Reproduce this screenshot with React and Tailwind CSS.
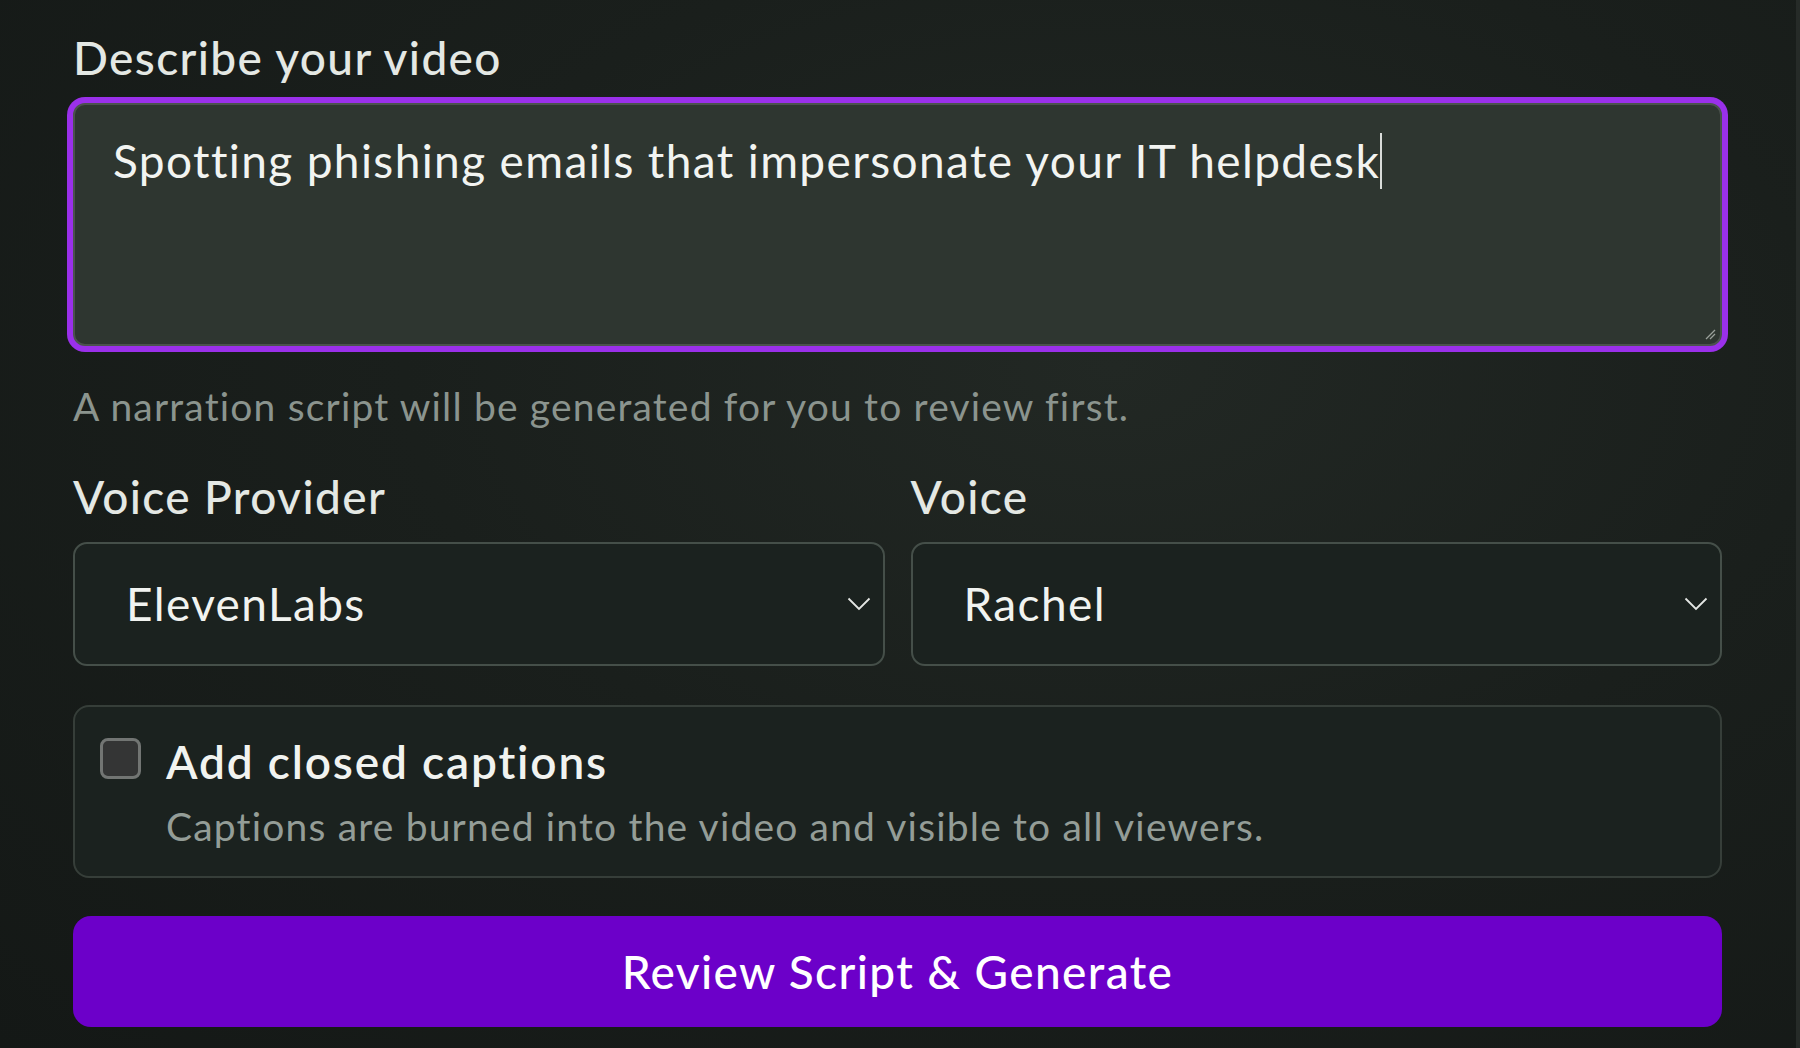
import React from 'react';

function Chevron() {
  return (
    <svg width="24" height="14" viewBox="0 0 24 14" fill="none" className="shrink-0">
      <polyline points="1.5,1.5 12,12 22.5,1.5" stroke="#e4e7e4" strokeWidth="1.8" />
    </svg>
  );
}

function Select({ value }) {
  return (
    <div className="h-[124px] flex items-center justify-between rounded-[14px] border-2 border-[#454f49] bg-[#1b221f] pl-[51px] pr-[12px]">
      <span className="text-[46px] leading-[56px] tracking-[0.03em] text-[#f1f3f0]">{value}</span>
      <Chevron />
    </div>
  );
}

export default function App() {
  return (
    <div className="w-[1800px] h-[1048px] overflow-hidden border-r-[4px] border-[#262b28] bg-[#161a18] bg-[radial-gradient(ellipse_at_62%_35%,#222824_0%,#1a1f1c_45%,#141816_100%)] font-[Lato,sans-serif]">
      <div className="ml-[73px] w-[1649px] pt-[30px]">
        {/* Prompt */}
        <label className="block text-[46px] leading-[56px] font-medium tracking-[0.03em] text-[#e4e8e4]">Describe your video</label>
        <div className="relative mt-[17px] h-[243px] rounded-[12px] border-2 border-[#4b524e] bg-[#2e3630] ring-[6px] ring-[#9a30ea] pt-[28px] pl-[38px]">
          <p className="text-[46px] leading-[56px] tracking-[0.03em] text-[#f2f4f1]">
            Spotting phishing emails that impersonate your IT helpdesk
            <span className="inline-block w-[2px] h-[56px] bg-[#d9dcd9] align-top" />
          </p>
          <svg width="12" height="12" viewBox="0 0 12 12" className="absolute right-[4px] bottom-[4px]">
            <line x1="2" y1="11" x2="11" y2="2" stroke="#9aa09b" strokeWidth="1.3" />
            <line x1="6" y1="11" x2="11" y2="6" stroke="#9aa09b" strokeWidth="1.3" />
          </svg>
        </div>
        <p className="mt-[36px] text-[39px] leading-[48px] tracking-[0.03em] text-[#8b948e]">
          A narration script will be generated for you to review first.
        </p>

        {/* Voice */}
        <div className="mt-[39px] grid grid-cols-2 gap-x-[26px]">
          <div>
            <label className="block text-[46px] leading-[56px] font-medium tracking-[0.03em] text-[#e4e8e4]">Voice Provider</label>
            <div className="mt-[17px]">
              <Select value="ElevenLabs" />
            </div>
          </div>
          <div>
            <label className="block text-[46px] leading-[56px] font-medium tracking-[0.03em] text-[#e4e8e4]">Voice</label>
            <div className="mt-[17px]">
              <Select value="Rachel" />
            </div>
          </div>
        </div>

        {/* Captions */}
        <div className="mt-[39px] rounded-[16px] border-2 border-[#363e39] bg-[#1b221f] pt-[27px] pb-[26px] pl-[25px] pr-[25px]">
          <div className="flex items-start gap-[25px]">
            <div className="mt-[4px] w-[41px] h-[41px] shrink-0 rounded-[8px] border-[3px] border-[#727573] bg-[#343535]" />
            <div>
              <p className="text-[46px] leading-[56px] font-semibold tracking-[0.04em] text-[#f1f3f0]">Add closed captions</p>
              <p className="mt-[12px] text-[39px] leading-[48px] tracking-[0.03em] text-[#949d97]">
                Captions are burned into the video and visible to all viewers.
              </p>
            </div>
          </div>
        </div>

        {/* Submit */}
        <button className="mt-[38px] w-full h-[111px] rounded-[18px] bg-[#6c00c9] text-[46px] leading-[56px] font-medium tracking-[0.03em] text-white">
          Review Script &amp; Generate
        </button>
      </div>
    </div>
  );
}
